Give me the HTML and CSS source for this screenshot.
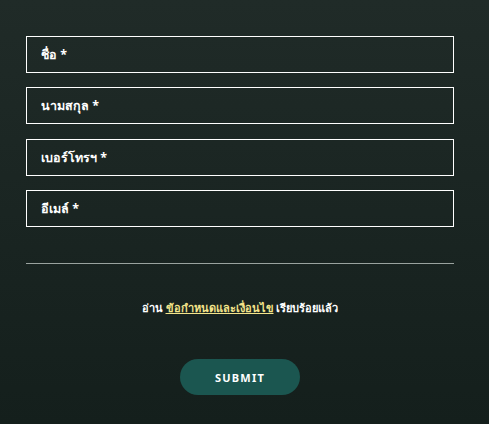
FILE: index.html
```html
<!DOCTYPE html>
<html lang="th">
<head>
  <meta charset="UTF-8">
  <meta name="viewport" content="width=device-width, initial-scale=1.0">
  <title>สมัคร</title>
  <link rel="stylesheet" href="styles.css">
</head>
<body>
  <form class="signup-form" onsubmit="event.preventDefault()">
    <input class="field" type="text" placeholder="ชื่อ *">
    <input class="field" type="text" placeholder="นามสกุล *">
    <input class="field" type="tel" placeholder="เบอร์โทรฯ *">
    <input class="field" type="email" placeholder="อีเมล์ *">
    <hr class="divider">
    <p class="terms">อ่าน <a href="#">ข้อกำหนดและเงื่อนไข</a> เรียบร้อยแล้ว</p>
    <button type="submit" class="submit-btn">SUBMIT</button>
  </form>
</body>
</html>
```

FILE: styles.css
```css
html {
  height: 100%;
}
body {
  margin: 0;
  min-height: 100%;
  background: linear-gradient(to bottom, #202b28, #141f1c);
  font-family: "Noto Sans", "Liberation Sans", sans-serif;
  color: #fff;
}
.signup-form {
  display: flex;
  flex-direction: column;
  align-items: center;
  padding: 36px 35px 0 26px;
}
.field {
  box-sizing: border-box;
  width: 100%;
  height: 37px;
  margin-bottom: 14.3px;
  padding: 0 14px;
  background: transparent;
  border: 1px solid #fff;
  border-radius: 0;
  color: #fff;
  font-family: inherit;
  font-size: 12.5px;
  font-weight: bold;
}
.field::placeholder {
  color: #fff;
  opacity: 1;
}
.divider {
  width: 100%;
  margin: 22px 0 0;
  border: none;
  border-top: 1px solid #9aa39f;
}
.terms {
  margin: 35px 0 0;
  font-size: 11px;
  font-weight: bold;
}
.terms a {
  color: #f3e48a;
}
.submit-btn {
  margin-top: 42px;
  width: 120px;
  height: 36px;
  border: none;
  border-radius: 18px;
  background-color: #1b5650;
  color: #fff;
  font-family: inherit;
  font-size: 11px;
  font-weight: bold;
  letter-spacing: 1.2px;
  cursor: pointer;
}
```
